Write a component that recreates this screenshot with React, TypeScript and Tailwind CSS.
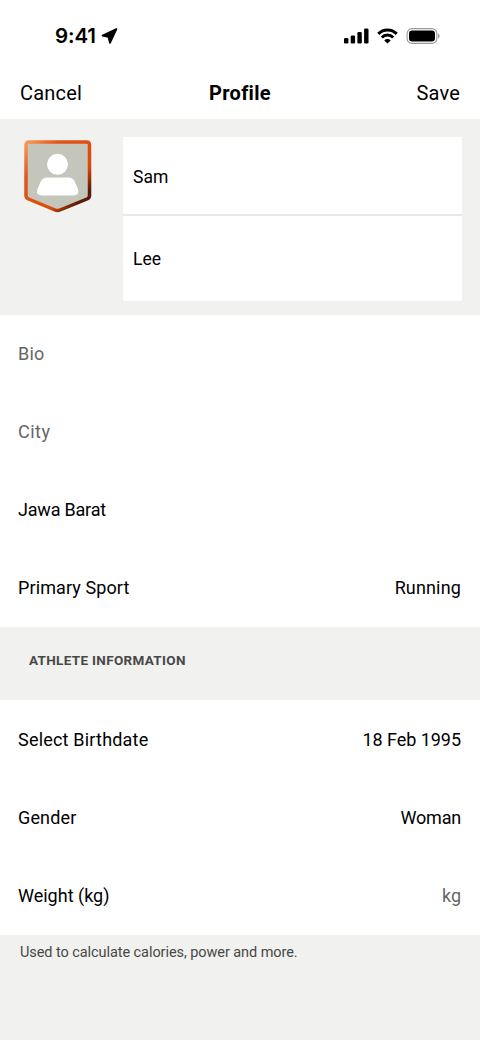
import React from 'react';

interface RowProps {
  label: string;
  labelClass?: string;
  value?: string;
  valueClass?: string;
}

const Row: React.FC<RowProps> = ({ label, labelClass = '', value, valueClass = '' }) => {
  return (
    <div className="flex h-[78px] items-center justify-between pl-[18px] pr-[19px] text-[18px] leading-6 text-black">
      <span className={labelClass}>{label}</span>
      {value && <span className={valueClass}>{value}</span>}
    </div>
  );
};

const StatusBar = () => (
  <div className="flex h-[66px] items-center justify-between pl-[55px] pr-10 pt-[6px]">
    <div className="flex items-center gap-[5px]">
      <span className="font-['Inter',sans-serif] text-[20.5px] font-semibold leading-6 tracking-[-0.1px] text-black">9:41</span>
      <svg width="17" height="16" viewBox="0 0 17 16">
        <path d="M15.4 1 L1.6 7.6 L7.4 9 L9 14.8 Z" fill="#000" stroke="#000" strokeWidth="1.8" strokeLinejoin="round" />
      </svg>
    </div>
    <div className="flex items-center">
      <svg width="25" height="16" viewBox="0 0 25 16">
        <rect x="0" y="10" width="4.4" height="5.5" rx="1.3" />
        <rect x="6.7" y="7.5" width="4.4" height="8" rx="1.3" />
        <rect x="13.4" y="4" width="4.4" height="11.5" rx="1.3" />
        <rect x="20.1" y="0.5" width="4.4" height="15" rx="1.3" />
      </svg>
      <svg className="ml-2" width="21" height="16" viewBox="0 0 21 16" fill="none" stroke="#000" strokeWidth="3">
        <path d="M1.3 5.9a13 13 0 0 1 18.4 0" />
        <path d="M4.8 9.5a8 8 0 0 1 11.4 0" />
        <path d="M7.3 12.4a4.6 4.6 0 0 1 6.4 0L10.5 15.6Z" fill="#000" stroke="none" />
      </svg>
      <svg className="ml-2" width="34" height="16" viewBox="0 0 34 16">
        <rect x="1.1" y="0.6" width="29.8" height="14.8" rx="5" fill="none" stroke="#999" strokeWidth="1.1" />
        <rect x="3" y="2.5" width="26" height="11" rx="3.2" />
        <path d="M32.2 5.5c1.8 .6 1.8 4.4 0 5z" fill="#999" />
      </svg>
    </div>
  </div>
);

const Avatar = () => (
  <svg width="68" height="73" viewBox="0 0 68 73">
    <defs>
      <linearGradient id="frame" x1="0" y1="0" x2="1" y2="1">
        <stop offset="0" stopColor="#fb9a5c" />
        <stop offset="0.25" stopColor="#e0571a" />
        <stop offset="0.68" stopColor="#dc4a08" />
        <stop offset="0.85" stopColor="#5c1a08" />
        <stop offset="1" stopColor="#5c1a08" />
      </linearGradient>
    </defs>
    <path
      d="M5 2H62.5Q65.5 2 65.5 5V55.5Q65.5 58 63 59L36 70Q33.5 71.2 31 70L4.5 59Q2 58 2 55.5V5Q2 2 5 2Z"
      fill="#c4c5bb"
      stroke="url(#frame)"
      strokeWidth="3.5"
    />
    <circle cx="33.5" cy="24.3" r="10.5" fill="#fff" />
    <path d="M23 37.5H44.5Q48.500 37.500 50.500 41L54 49Q55.500 55.500 49.500 55.500H18Q11.500 55.500 13.500 49L17 41Q19 37.500 23 37.500Z" fill="#fff" />
  </svg>
);

const App: React.FC = () => {
  return (
    <div className="min-h-[1040px] w-[480px] bg-[#f1f1ef] font-['Roboto',sans-serif]">
      <header className="h-[119px] bg-white">
        <StatusBar />
        <nav className="flex h-[53px] items-center justify-between px-5 text-[20px] leading-6 text-black">
          <span className="w-20 tracking-[0.2px]">Cancel</span>
          <h1 className="font-bold tracking-[0.3px]">Profile</h1>
          <span className="w-20 text-right tracking-[0.2px]">Save</span>
        </nav>
      </header>

      <section className="flex h-[196px] items-start justify-between pl-6 pr-[18px] pt-[18px]">
        <div className="pt-[3px]">
          <Avatar />
        </div>
        <div className="w-[339px] bg-white text-[17.5px] leading-6 text-black">
          <div className="flex h-[79px] items-center border-b-2 border-[#e9e9e8] pl-[10px] pt-[2px]">Sam</div>
          <div className="flex h-[85px] items-center pl-[10px]">Lee</div>
        </div>
      </section>

      <section className="bg-white">
        <Row label="Bio" labelClass="text-[#666] tracking-[0.2px]" />
        <Row label="City" labelClass="text-[#666] tracking-[0.5px]" />
        <Row label="Jawa Barat" labelClass="tracking-[-0.2px]" />
        <Row label="Primary Sport" labelClass="tracking-[0.1px]" value="Running" valueClass="tracking-[0.15px]" />
      </section>

      <h2 className="flex h-[73px] items-center pb-[6px] pl-[29px] text-[13.5px] font-bold tracking-[0.32px] text-[#484847]">
        ATHLETE INFORMATION
      </h2>

      <section className="bg-white pt-px">
        <Row label="Select Birthdate" labelClass="tracking-[0.2px]" value="18 Feb 1995" valueClass="tracking-[-0.05px]" />
        <Row label="Gender" labelClass="tracking-[0.15px]" value="Woman" valueClass="tracking-[-0.2px]" />
        <Row label="Weight (kg)" value="kg" valueClass="text-[#666]" />
      </section>

      <p className="px-5 pt-2 text-[14.5px] leading-5 tracking-[-0.07px] text-[#484847]">
        Used to calculate calories, power and more.
      </p>
    </div>
  );
};

export default App;
